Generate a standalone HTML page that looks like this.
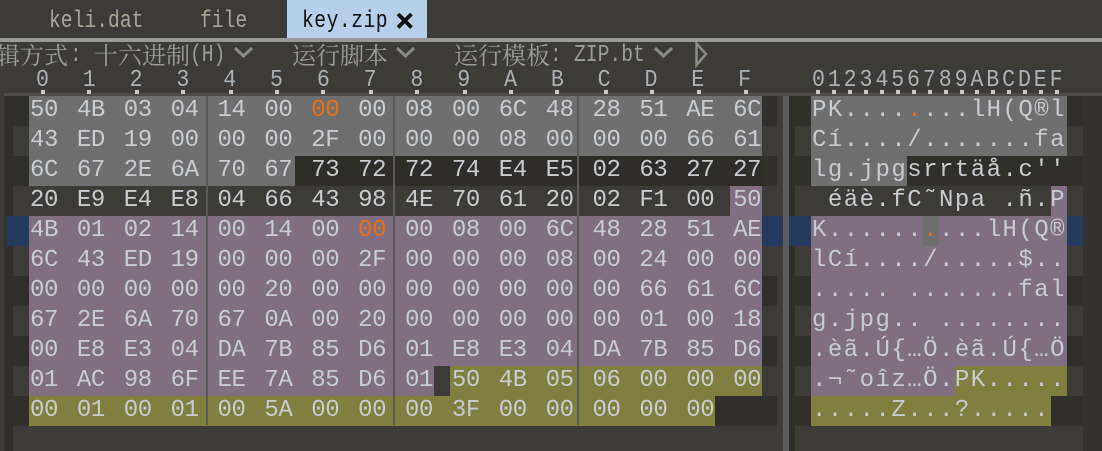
<!DOCTYPE html>
<html><head><meta charset="utf-8"><style>
html,body{margin:0;padding:0;background:#3c3b37;width:1102px;height:451px;overflow:hidden}
div,pre,svg{position:absolute;margin:0}
pre{font-family:"Liberation Mono",monospace;font-size:24px;line-height:30px;height:30px;color:#c8ccd0;white-space:pre}
.h{left:30px;letter-spacing:-.4px;word-spacing:4.870px}
.a{letter-spacing:1.470px;left:812px}
.hd{left:36px;top:66px;color:#a9b0b6;transform:scaleX(.9);transform-origin:0 0;word-spacing:23px;letter-spacing:.1px}
.n{transform:scaleX(.82);transform-origin:0 0}
.o{color:#e8701a}
.z{font-family:"Noto Serif CJK SC","Liberation Serif",serif;font-size:24px;line-height:30px;white-space:pre;color:#9b9b97}
.k{background:#c9c9c9;width:4px;height:4px;top:90px}
</style></head><body>
<!-- tabs -->
<div style="left:287px;top:0;width:140px;height:38px;background:#b8cfe9"></div>
<div style="left:0;top:38px;width:1102px;height:4px;background:#999"></div>
<pre class="n" style="left:49px;top:7px;color:#aaa598">keli.dat</pre>
<pre class="n" style="left:200px;top:7px;color:#aaa598">file</pre>
<pre class="n" style="left:302px;top:7px;color:#111;letter-spacing:.6px">key.zip</pre>
<svg style="left:396px;top:13px" width="18" height="16"><path d="M2 1L15.500 14.500M15.500 1L2 14.500" stroke="#111" stroke-width="3.800" fill="none"/></svg>
<!-- toolbar -->
<div class="z" style="left:-4px;top:39px">辑方式</div>
<pre class="n" style="left:70px;top:41px;color:#9b9b97">:</pre>
<div class="z" style="left:94px;top:39px">十六进制</div>
<pre class="n" style="left:190px;top:41px;color:#9b9b97">(H)</pre>
<div class="z" style="left:292px;top:39px">运行脚本</div>
<div class="z" style="left:454px;top:39px">运行模板</div>
<pre class="n" style="left:550px;top:41px;color:#9b9b97">:</pre>
<pre class="n" style="left:574px;top:41px;color:#9b9b97">ZIP.bt</pre>
<svg style="left:0;top:42px" width="720" height="26" fill="none" stroke="#8a8a86" stroke-width="3">
<path d="M235 6L243.500 14L252 6M397 6L405.500 14L414 6M655 6L663.500 14L672 6"/>
<path d="M696.500 1.500V23L706 12Z" stroke-width="2.500"/></svg>
<!-- header -->
<pre class="hd">0 1 2 3 4 5 6 7 8 9 A B C D E F</pre>
<pre class="n" style="top:66px;left:812px;color:#a9b0b6;transform:scaleX(.9);letter-spacing:3.200px">0123456789ABCDEF</pre>
<div style="left:4px;top:93px;width:1098px;height:3px;background:#4b4a46"></div>
<div class="k" style="left:41px"></div><div class="k" style="left:87px"></div><div class="k" style="left:135px"></div><div class="k" style="left:181px"></div><div class="k" style="left:229px"></div><div class="k" style="left:275px"></div><div class="k" style="left:321px"></div><div class="k" style="left:369px"></div><div class="k" style="left:415px"></div><div class="k" style="left:463px"></div><div class="k" style="left:509px"></div><div class="k" style="left:555px"></div><div class="k" style="left:604px"></div><div class="k" style="left:650px"></div><div class="k" style="left:697px"></div><div class="k" style="left:744px"></div>
<div class="k" style="left:816px"></div><div class="k" style="left:832px"></div><div class="k" style="left:848px"></div><div class="k" style="left:864px"></div><div class="k" style="left:880px"></div><div class="k" style="left:896px"></div><div class="k" style="left:912px"></div><div class="k" style="left:928px"></div><div class="k" style="left:944px"></div><div class="k" style="left:960px"></div><div class="k" style="left:975px"></div><div class="k" style="left:991px"></div><div class="k" style="left:1007px"></div><div class="k" style="left:1023px"></div><div class="k" style="left:1039px"></div><div class="k" style="left:1055px"></div>
<!-- panel backgrounds -->
<div style="left:4px;top:96px;width:9px;height:355px;background:#33322e"></div>
<div style="left:7px;top:96px;width:770px;height:355px;background:#302f2b"></div>
<div style="left:789px;top:96px;width:294px;height:355px;background:#302f2b"></div>
<div style="left:1083px;top:96px;width:19px;height:355px;background:#33322e"></div>
<div style="left:13px;top:126px;width:764px;height:30px;background:#3c3b37"></div>
<div style="left:13px;top:186px;width:764px;height:30px;background:#3c3b37"></div>
<div style="left:13px;top:246px;width:764px;height:30px;background:#3c3b37"></div>
<div style="left:13px;top:306px;width:764px;height:30px;background:#3c3b37"></div>
<div style="left:13px;top:366px;width:764px;height:30px;background:#3c3b37"></div>
<div style="left:13px;top:426px;width:764px;height:25px;background:#3c3b37"></div>
<div style="left:795px;top:126px;width:288px;height:30px;background:#3c3b37"></div>
<div style="left:795px;top:186px;width:288px;height:30px;background:#3c3b37"></div>
<div style="left:795px;top:246px;width:288px;height:30px;background:#3c3b37"></div>
<div style="left:795px;top:306px;width:288px;height:30px;background:#3c3b37"></div>
<div style="left:795px;top:366px;width:288px;height:30px;background:#3c3b37"></div>
<div style="left:795px;top:426px;width:288px;height:25px;background:#3c3b37"></div>
<div style="left:7px;top:216px;width:776px;height:30px;background:#253a5c"></div>
<div style="left:789px;top:216px;width:294px;height:30px;background:#253a5c"></div>
<div style="left:783px;top:96px;width:6px;height:355px;background:#5c5c5e"></div>
<!-- hex selection -->
<div style="left:29px;top:96px;width:733px;height:60px;background:#6f6f6f"></div>
<div style="left:29px;top:156px;width:266px;height:30px;background:#6f6f6f"></div>
<div style="left:295px;top:156px;width:467px;height:30px;background:#2e2d2a"></div>
<div style="left:730px;top:186px;width:32px;height:30px;background:#7f6f80"></div>
<div style="left:29px;top:216px;width:733px;height:150px;background:#7f6f80"></div>
<div style="left:29px;top:366px;width:405px;height:30px;background:#7f6f80"></div>
<div style="left:434px;top:366px;width:16px;height:30px;background:#3c3b37"></div>
<div style="left:450px;top:366px;width:312px;height:30px;background:#807f40"></div>
<div style="left:29px;top:396px;width:686px;height:30px;background:#807f40"></div>
<div style="left:206px;top:96px;width:2px;height:329px;background:#5a5a5a"></div>
<div style="left:393px;top:96px;width:2px;height:329px;background:#5a5a5a"></div>
<div style="left:577px;top:96px;width:2px;height:329px;background:#5a5a5a"></div>
<!-- ascii selection -->
<div style="left:811px;top:96px;width:256px;height:60px;background:#6f6f6f"></div>
<div style="left:811px;top:156px;width:96px;height:30px;background:#6f6f6f"></div>
<div style="left:1051px;top:186px;width:16px;height:30px;background:#7f6f80"></div>
<div style="left:811px;top:216px;width:256px;height:150px;background:#7f6f80"></div>
<div style="left:923px;top:216px;width:16px;height:30px;background:#6f6f6f"></div>
<div style="left:811px;top:366px;width:144px;height:30px;background:#7f6f80"></div>
<div style="left:955px;top:366px;width:112px;height:30px;background:#807f40"></div>
<div style="left:811px;top:396px;width:240px;height:30px;background:#807f40"></div>
<!-- hex text -->
<pre class="h" style="top:96px">50 4B 03 04 14 00 <span class="o">00</span> 00 08 00 6C 48 28 51 AE 6C</pre>
<pre class="h" style="top:126px">43 ED 19 00 00 00 2F 00 00 00 08 00 00 00 66 61</pre>
<pre class="h" style="top:156px">6C 67 2E 6A 70 67 73 72 72 74 E4 E5 02 63 27 27</pre>
<pre class="h" style="top:186px">20 E9 E4 E8 04 66 43 98 4E 70 61 20 02 F1 00 50</pre>
<pre class="h" style="top:216px">4B 01 02 14 00 14 00 <span class="o">00</span> 00 08 00 6C 48 28 51 AE</pre>
<pre class="h" style="top:246px">6C 43 ED 19 00 00 00 2F 00 00 00 08 00 24 00 00</pre>
<pre class="h" style="top:276px">00 00 00 00 00 20 00 00 00 00 00 00 00 66 61 6C</pre>
<pre class="h" style="top:306px">67 2E 6A 70 67 0A 00 20 00 00 00 00 00 01 00 18</pre>
<pre class="h" style="top:336px">00 E8 E3 04 DA 7B 85 D6 01 E8 E3 04 DA 7B 85 D6</pre>
<pre class="h" style="top:366px">01 AC 98 6F EE 7A 85 D6 01 50 4B 05 06 00 00 00</pre>
<pre class="h" style="top:396px">00 01 00 01 00 5A 00 00 00 3F 00 00 00 00 00</pre>
<!-- ascii text -->
<pre class="a" style="top:96px">PK....<span class="o">.</span>...lH(Q®l</pre>
<pre class="a" style="top:126px">Cí..../.......fa</pre>
<pre class="a" style="top:156px">lg.jpgsrrtäå.c''</pre>
<pre class="a" style="top:186px"> éäè.fC˜Npa .ñ.P</pre>
<pre class="a" style="top:216px">K......<span class="o">.</span>...lH(Q®</pre>
<pre class="a" style="top:246px">lCí..../.....$..</pre>
<pre class="a" style="top:276px">..... .......fal</pre>
<pre class="a" style="top:306px">g.jpg.. ........</pre>
<pre class="a" style="top:336px">.èã.Ú{…Ö.èã.Ú{…Ö</pre>
<pre class="a" style="top:366px">.¬˜oîz…Ö.PK.....</pre>
<pre class="a" style="top:396px">.....Z...?.....</pre>
</body></html>
